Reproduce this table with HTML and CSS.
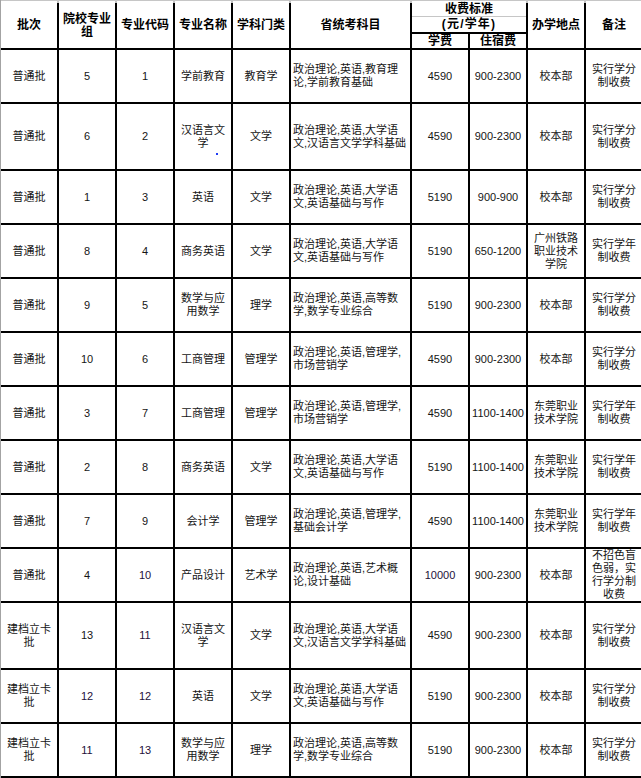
FILE: index.html
```html
<!DOCTYPE html>
<html lang="zh-CN">
<head>
<meta charset="utf-8">
<title>招生专业表</title>
<link rel="stylesheet" href="styles.css">
</head>
<body>
<div class="sheet">
  <div class="strip">
    <div></div><div></div><div></div><div></div><div></div><div></div>
    <div class="span2"></div><div></div><div></div>
  </div>
  <div class="grid">
    <div class="c h">批次</div>
    <div class="c h">院校专业组</div>
    <div class="c h">专业代码</div>
    <div class="c h">专业名称</div>
    <div class="c h">学科门类</div>
    <div class="c h">省统考科目</div>
    <div class="fee h">
      <div class="fee-top">收费标准</div>
      <div class="fee-mid">(元/学年)</div>
      <div class="fee-sub"><div>学费</div><div>住宿费</div></div>
    </div>
    <div class="c h">办学地点</div>
    <div class="c h">备注</div>

    <div class="c">普通批</div><div class="c">5</div><div class="c">1</div><div class="c">学前教育</div><div class="c">教育学</div>
    <div class="c subj">政治理论,英语,教育理论,学前教育基础</div><div class="c">4590</div><div class="c nw">900-2300</div><div class="c">校本部</div><div class="c">实行学分制收费</div>

    <div class="c">普通批</div><div class="c">6</div><div class="c">2</div><div class="c mark">汉语言文学<span class="dot"></span></div><div class="c">文学</div>
    <div class="c subj">政治理论,英语,大学语文,汉语言文学学科基础</div><div class="c">4590</div><div class="c nw">900-2300</div><div class="c">校本部</div><div class="c">实行学分制收费</div>

    <div class="c">普通批</div><div class="c">1</div><div class="c">3</div><div class="c">英语</div><div class="c">文学</div>
    <div class="c subj">政治理论,英语,大学语文,英语基础与写作</div><div class="c">5190</div><div class="c nw">900-900</div><div class="c">校本部</div><div class="c">实行学分制收费</div>

    <div class="c">普通批</div><div class="c">8</div><div class="c">4</div><div class="c">商务英语</div><div class="c">文学</div>
    <div class="c subj">政治理论,英语,大学语文,英语基础与写作</div><div class="c">5190</div><div class="c nw">650-1200</div><div class="c">广州铁路职业技术学院</div><div class="c">实行学年制收费</div>

    <div class="c">普通批</div><div class="c">9</div><div class="c">5</div><div class="c">数学与应用数学</div><div class="c">理学</div>
    <div class="c subj">政治理论,英语,高等数学,数学专业综合</div><div class="c">5190</div><div class="c nw">900-2300</div><div class="c">校本部</div><div class="c">实行学分制收费</div>

    <div class="c">普通批</div><div class="c">10</div><div class="c">6</div><div class="c">工商管理</div><div class="c">管理学</div>
    <div class="c subj">政治理论,英语,管理学,市场营销学</div><div class="c">4590</div><div class="c nw">900-2300</div><div class="c">校本部</div><div class="c">实行学分制收费</div>

    <div class="c">普通批</div><div class="c">3</div><div class="c">7</div><div class="c">工商管理</div><div class="c">管理学</div>
    <div class="c subj">政治理论,英语,管理学,市场营销学</div><div class="c">4590</div><div class="c nw">1100-1400</div><div class="c">东莞职业技术学院</div><div class="c">实行学年制收费</div>

    <div class="c">普通批</div><div class="c">2</div><div class="c">8</div><div class="c">商务英语</div><div class="c">文学</div>
    <div class="c subj">政治理论,英语,大学语文,英语基础与写作</div><div class="c">5190</div><div class="c nw">1100-1400</div><div class="c">东莞职业技术学院</div><div class="c">实行学年制收费</div>

    <div class="c">普通批</div><div class="c">7</div><div class="c">9</div><div class="c">会计学</div><div class="c">管理学</div>
    <div class="c subj">政治理论,英语,管理学,基础会计学</div><div class="c">4590</div><div class="c nw">1100-1400</div><div class="c">东莞职业技术学院</div><div class="c">实行学年制收费</div>

    <div class="c">普通批</div><div class="c">4</div><div class="c num2">10</div><div class="c">产品设计</div><div class="c">艺术学</div>
    <div class="c subj">政治理论,英语,艺术概论,设计基础</div><div class="c num2">10000</div><div class="c nw">900-2300</div><div class="c">校本部</div><div class="c">不招色盲色弱，实行学分制收费</div>

    <div class="c">建档立卡批</div><div class="c">13</div><div class="c num2">11</div><div class="c">汉语言文学</div><div class="c">文学</div>
    <div class="c subj">政治理论,英语,大学语文,汉语言文学学科基础</div><div class="c">4590</div><div class="c nw">900-2300</div><div class="c">校本部</div><div class="c">实行学分制收费</div>

    <div class="c">建档立卡批</div><div class="c num2">12</div><div class="c num2">12</div><div class="c">英语</div><div class="c">文学</div>
    <div class="c subj">政治理论,英语,大学语文,英语基础与写作</div><div class="c">5190</div><div class="c nw">900-2300</div><div class="c">校本部</div><div class="c">实行学分制收费</div>

    <div class="c">建档立卡批</div><div class="c num2">11</div><div class="c num2">13</div><div class="c">数学与应用数学</div><div class="c">理学</div>
    <div class="c subj">政治理论,英语,高等数学,数学专业综合</div><div class="c">5190</div><div class="c nw">900-2300</div><div class="c">校本部</div><div class="c">实行学分制收费</div>
  </div>
</div>
</body>
</html>
```

FILE: styles.css
```css
html, body {
  margin: 0;
  padding: 0;
  overflow: hidden;
  background: #ffffff;
}

body {
  font-family: "Liberation Sans", "Noto Sans CJK SC", sans-serif;
  color: #151515;
}

.sheet {
  width: 642px;
  border-left: 1px solid #a3a3a3;
}

.strip {
  display: grid;
  grid-template-columns: repeat(5, 56px) 119px repeat(4, 56px);
  column-gap: 2px;
  height: 2px;
  background: #c6c6c6;
  border-top: 1px solid #c6c6c6;
}

.strip > div {
  background: #fff;
}

.strip .span2 {
  grid-column: span 2;
}

.grid {
  display: grid;
  grid-template-columns: repeat(5, 56px) 119px repeat(4, 56px);
  grid-template-rows: 45px 52px 65px repeat(8, 52px) 65px 52px 52px;
  gap: 2px;
  background: #000;
  border-bottom: 2px solid #000;
}

.c {
  background: #fff;
  display: flex;
  align-items: center;
  justify-content: center;
  text-align: center;
  padding: 0 3px;
  font-size: 11px;
  line-height: 13px;
  overflow: hidden;
}

.c.nw {
  white-space: nowrap;
  padding: 0;
}

.c.subj {
  justify-content: flex-start;
  text-align: left;
  padding: 0 3px 0 2px;
}

.h {
  font-weight: bold;
  font-size: 12px;
  line-height: 12.5px;
  color: #000;
}

.num2 {
  color: #24103a;
}

.mark {
  position: relative;
}

.dot {
  position: absolute;
  left: 41px;
  top: 49px;
  width: 2px;
  height: 2px;
  background: #1f3cf5;
}

.fee {
  grid-column: span 2;
  display: flex;
  flex-direction: column;
  background: #fff;
  text-align: center;
}

.fee-top {
  height: 13px;
  line-height: 13px;
  border-bottom: 1px solid #c6c6c6;
}

.fee-mid {
  height: 15px;
  line-height: 15px;
  letter-spacing: 1.2px;
}

.fee-sub {
  display: grid;
  grid-template-columns: 56px 56px;
  column-gap: 2px;
  border-top: 2px solid #000;
  background: #000;
  height: 14px;
}

.fee-sub > div {
  background: #fff;
  line-height: 14px;
}
```
